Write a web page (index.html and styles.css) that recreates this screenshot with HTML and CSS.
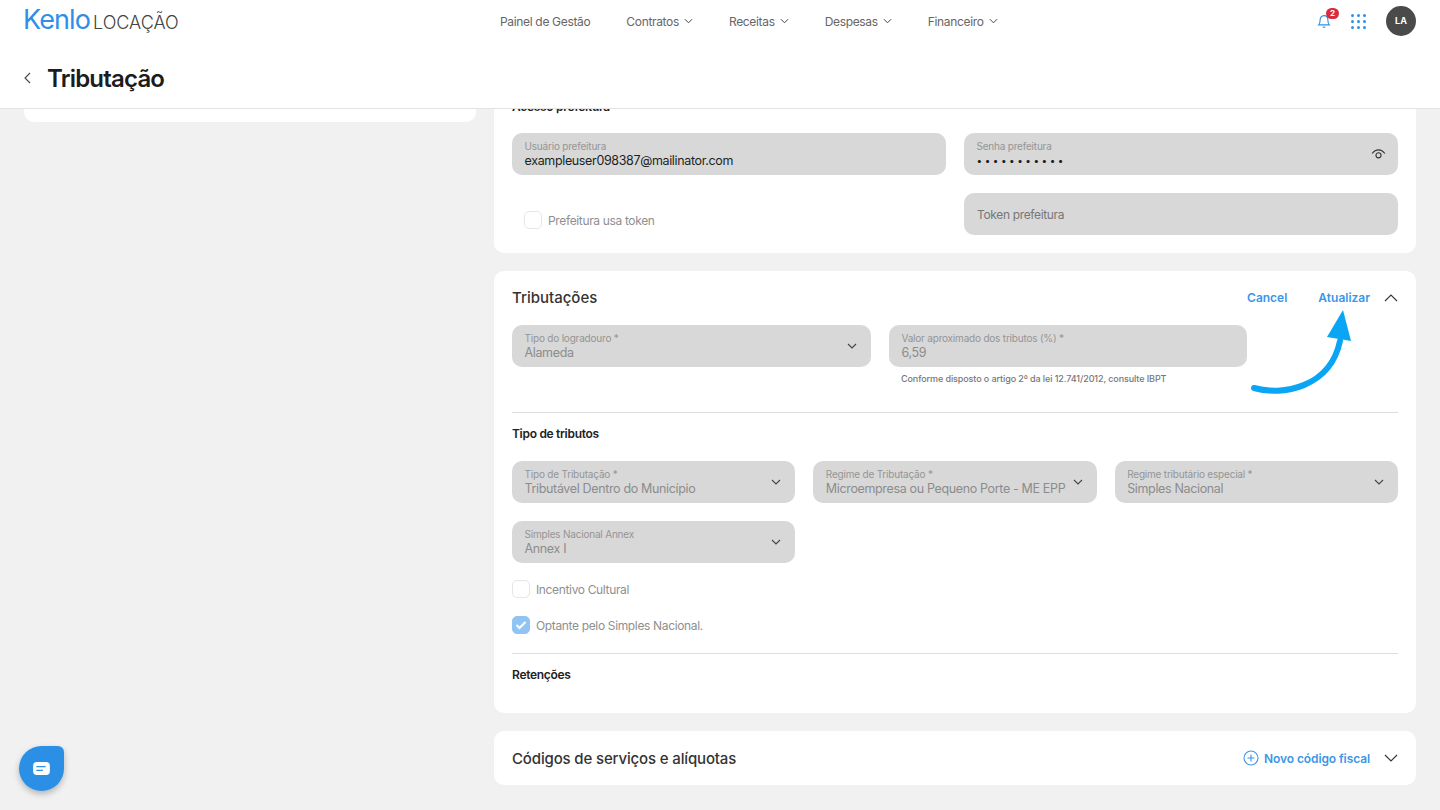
FILE: index.html
```html
<!DOCTYPE html>
<html lang="pt-BR">
<head>
    <meta charset="UTF-8">
    <meta name="viewport" content="width=device-width, initial-scale=1.0">
    <title>Tributação</title>
    <link rel="stylesheet" href="styles.css">
</head>
<body>
    <header class="topbar">
        <div class="nav-row">
            <div class="logo"><span class="logo-mark">Kenlo</span><span class="logo-sub">LOCAÇÃO</span></div>
            <nav class="nav">
                <a>Painel de Gestão</a>
                <a>Contratos <svg class="nav-caret" viewBox="0 0 10 6"><path d="M1 1l4 4 4-4"/></svg></a>
                <a>Receitas <svg class="nav-caret" viewBox="0 0 10 6"><path d="M1 1l4 4 4-4"/></svg></a>
                <a>Despesas <svg class="nav-caret" viewBox="0 0 10 6"><path d="M1 1l4 4 4-4"/></svg></a>
                <a>Financeiro <svg class="nav-caret" viewBox="0 0 10 6"><path d="M1 1l4 4 4-4"/></svg></a>
            </nav>
            <div class="nav-right">
                <div class="bell">
                    <svg viewBox="0 0 16 18" width="14" height="16"><path d="M2 13.500c1.200-1.300 1.500-2.500 1.500-5C3.500 5 5.300 2.800 8 2.800s4.500 2.200 4.500 5.700c0 2.500.3 3.700 1.500 5z"/><path d="M6.500 16h3"/></svg>
                    <span class="badge">2</span>
                </div>
                <div class="apps">
                    <i></i><i></i><i></i><i></i><i></i><i></i><i></i><i></i><i></i>
                </div>
                <div class="avatar">LA</div>
            </div>
        </div>
        <div class="title-row">
            <svg class="back" viewBox="0 0 7 12" width="7" height="12"><path d="M6 1L1 6l5 5"/></svg>
            <h1>Tributação</h1>
        </div>
    </header>

    <main class="page">
        <aside class="side">
            <div class="side-card"></div>
        </aside>
        <div class="content">
            <!-- Acesso prefeitura -->
            <section class="card card-access">
                <h3 class="sub-title">Acesso prefeitura</h3>
                <div class="grid-2">
                    <div class="field">
                        <label>Usuário prefeitura</label>
                        <div class="value dark">exampleuser098387@mailinator.com</div>
                    </div>
                    <div class="field">
                        <label>Senha prefeitura</label>
                        <div class="value dark dots">•••••••••••</div>
                        <svg class="eye" viewBox="0 0 16 11" width="15" height="10"><path d="M1 5c2-2.700 4.300-4 7-4s5 1.300 7 4"/><circle cx="8" cy="7" r="2.800"/></svg>
                    </div>
                    <div class="check-row token-check">
                        <span class="box"></span>
                        <span>Prefeitura usa token</span>
                    </div>
                    <div class="field field-empty">Token prefeitura</div>
                </div>
            </section>

            <!-- Tributações -->
            <section class="card card-tax">
                <div class="card-head">
                    <h2>Tributações</h2>
                    <a class="link link-cancel">Cancel</a>
                    <a class="link">Atualizar</a>
                    <svg class="toggle" viewBox="0 0 14 8" width="14" height="8"><path d="M1 7l6-6 6 6"/></svg>
                </div>
                <div class="grid-tax">
                    <div class="field">
                        <label>Tipo do logradouro *</label>
                        <div class="value">Alameda</div>
                        <svg class="caret" viewBox="0 0 10 6"><path d="M1 1l4 4 4-4"/></svg>
                    </div>
                    <div>
                        <div class="field">
                            <label>Valor aproximado dos tributos (%) *</label>
                            <div class="value">6,59</div>
                        </div>
                        <p class="hint">Conforme disposto o artigo 2º da lei 12.741/2012, consulte IBPT</p>
                    </div>
                </div>
                <hr class="divider divider-top">
                <h3 class="sub-title">Tipo de tributos</h3>
                <div class="grid-3">
                    <div class="field">
                        <label>Tipo de Tributação *</label>
                        <div class="value">Tributável Dentro do Município</div>
                        <svg class="caret" viewBox="0 0 10 6"><path d="M1 1l4 4 4-4"/></svg>
                    </div>
                    <div class="field">
                        <label>Regime de Tributação *</label>
                        <div class="value">Microempresa ou Pequeno Porte - ME EPP</div>
                        <svg class="caret" viewBox="0 0 10 6"><path d="M1 1l4 4 4-4"/></svg>
                    </div>
                    <div class="field">
                        <label>Regime tributário especial *</label>
                        <div class="value">Simples Nacional</div>
                        <svg class="caret" viewBox="0 0 10 6"><path d="M1 1l4 4 4-4"/></svg>
                    </div>
                    <div class="field">
                        <label>Simples Nacional Annex</label>
                        <div class="value">Annex I</div>
                        <svg class="caret" viewBox="0 0 10 6"><path d="M1 1l4 4 4-4"/></svg>
                    </div>
                </div>
                <div class="check-row">
                    <span class="box"></span>
                    <span>Incentivo Cultural</span>
                </div>
                <div class="check-row">
                    <span class="box checked"><svg viewBox="0 0 12 10" width="12" height="10"><path d="M1.500 5l3 3 6-6"/></svg></span>
                    <span>Optante pelo Simples Nacional.</span>
                </div>
                <hr class="divider">
                <h3 class="sub-title">Retenções</h3>
                <!-- seta de destaque -->
                <svg class="arrow" viewBox="0 0 104 90" width="104" height="90">
                    <path class="arrow-line" d="M4 80c28 8 76 0 86-47"/>
                    <path class="arrow-head" d="M93 2L77 29l24 4z"/>
                </svg>
            </section>

            <!-- Códigos -->
            <section class="card card-codes">
                <h2>Códigos de serviços e alíquotas</h2>
                <a class="link link-new">
                    <svg viewBox="0 0 16 16" width="16" height="16"><circle cx="8" cy="8" r="7"/><path d="M8 4.500v7M4.500 8h7"/></svg>
                    Novo código fiscal
                </a>
                <svg class="toggle" viewBox="0 0 14 8" width="14" height="8"><path d="M1 1l6 6 6-6"/></svg>
            </section>
        </div>
    </main>

    <button class="chat-button">
        <svg viewBox="0 0 18 14" width="17" height="13"><rect width="18" height="14" rx="4"/><path d="M3.500 5h10M3.500 9h7"/></svg>
    </button>
</body>
</html>
```

FILE: styles.css
```css
/* General styles */
body {
    font-family: Inter, "Noto Sans", sans-serif;
    margin: 0;
    height: 810px;
    overflow: hidden;
    background-color: #f1f1f1;
    color: #1f1f1f;
}

/* Header */
.topbar {
    height: 109px;
    box-sizing: border-box;
    background: #fff;
    border-bottom: 1px solid #e2e2e2;
    position: relative;
    z-index: 2;
}

.nav-row {
    display: flex;
    align-items: center;
    height: 42px;
    padding: 0 24px;
}

.logo {
    display: flex;
    align-items: baseline;
    width: 476px;
    margin-left: -1px;
    margin-right: 1px;
    padding-bottom: 4px;
    line-height: 1;
}

.logo-mark {
    font-size: 27px;
    font-weight: 400;
    color: #2f8fe8;
    letter-spacing: -0.9px;
}

.logo-sub {
    margin-left: 3px;
    font-size: 18px;
    font-weight: 300;
    color: #444;
}

.nav {
    display: flex;
    gap: 36px;
    font-size: 12px;
    letter-spacing: -0.33px;
    color: #666;
}

.nav a {
    display: flex;
    align-items: center;
    gap: 5px;
}

.nav-caret {
    width: 9px;
    height: 6px;
}

.nav-caret, .caret, .toggle, .back {
    fill: none;
    stroke: #444;
    stroke-width: 1.1;
}

.nav-right {
    margin-left: auto;
    display: flex;
    align-items: center;
}

.bell {
    position: relative;
    display: flex;
}

.bell svg {
    fill: none;
    stroke: #2f8fe8;
    stroke-width: 1.3;
}

.badge {
    position: absolute;
    top: -5px;
    left: 9px;
    width: 13px;
    height: 11px;
    border-radius: 6px;
    background: #dc2a3c;
    color: #fff;
    font-size: 8px;
    font-weight: 700;
    line-height: 11px;
    text-align: center;
}

.apps {
    margin-left: 20px;
    display: grid;
    grid-template-columns: repeat(3, 3px);
    gap: 3px;
}

.apps i {
    width: 3px;
    height: 3px;
    border-radius: 50%;
    background: #2f8fe8;
}

.avatar {
    margin-left: 20px;
    width: 30px;
    height: 30px;
    border-radius: 50%;
    background: #4a4a4a;
    color: #fff;
    font-size: 9px;
    font-weight: 700;
    line-height: 30px;
    text-align: center;
}

.title-row {
    display: flex;
    align-items: center;
    height: 60px;
    margin-top: 6px;
    padding-left: 24px;
}

.back {
    margin-right: 17px;
}

h1 {
    margin: 0 0 0 -1px;
    font-size: 24px;
    font-weight: 600;
    letter-spacing: -0.8px;
    color: #1c1c1c;
}

/* Page */
.page {
    display: flex;
    gap: 18px;
    height: 701px;
    overflow: hidden;
    padding: 0 24px;
}

.side {
    width: 452px;
}

.side-card {
    height: 13px;
    background: #fff;
    border-radius: 0 0 10px 10px;
}

.content {
    flex: 1;
    display: flex;
    flex-direction: column;
    gap: 18px;
}

.card {
    position: relative;
    background: #fff;
    border-radius: 10px;
    padding: 0 18px;
}

.card-access {
    margin-top: -15px;
    padding-bottom: 18px;
}

.card-access .sub-title {
    margin: 6px 0 19px;
}

h2 {
    margin: 0;
    font-size: 15px;
    font-weight: 500;
    color: #333;
}

.sub-title {
    margin: 0;
    font-size: 12px;
    line-height: 14px;
    font-weight: 600;
    letter-spacing: -0.3px;
    color: #222;
}

.grid-2 {
    display: grid;
    grid-template-columns: 1fr 1fr;
    gap: 18px;
}

.field {
    position: relative;
    box-sizing: border-box;
    height: 42px;
    padding: 7px 12.5px;
    background: #d8d8d8;
    border-radius: 10px;
    color: #8c8c8c;
}

.field label {
    display: block;
    font-size: 10px;
    line-height: 13px;
    color: #959595;
    letter-spacing: -0.2px;
}

.value {
    font-size: 12.5px;
    line-height: 15px;
    letter-spacing: -0.35px;
    white-space: nowrap;
    color: #8c8c8c;
}

.value.dark {
    color: #1f1f1f;
}

.value.dots {
    font-size: 10px;
    letter-spacing: 2.5px;
}

.field-empty {
    padding-left: 13px;
    font-size: 12px;
    line-height: 29px;
    letter-spacing: -0.35px;
    color: #777;
}

.eye {
    position: absolute;
    right: 12px;
    top: 16px;
    fill: none;
    stroke: #333;
    stroke-width: 1.2;
}

.caret {
    position: absolute;
    right: 14px;
    top: 18px;
    width: 10px;
    height: 6px;
}

.check-row {
    display: flex;
    align-items: center;
    gap: 6px;
    height: 18px;
    font-size: 12px;
    letter-spacing: -0.35px;
    color: #8f8f8f;
}

.token-check {
    padding-left: 12px;
    margin-top: 18px;
}

.box {
    display: flex;
    align-items: center;
    justify-content: center;
    box-sizing: border-box;
    width: 18px;
    height: 18px;
    border: 1px solid #e6e6e6;
    border-radius: 5px;
}

.box.checked {
    background: #90c4f2;
    border-color: #90c4f2;
}

.box svg {
    fill: none;
    stroke: #fff;
    stroke-width: 2;
}

.card-tax {
    height: 442px;
    box-sizing: border-box;
}

.card-head {
    display: flex;
    align-items: center;
    height: 53px;
    margin-bottom: 1px;
}

.link {
    font-size: 12px;
    font-weight: 600;
    color: #3b96e8;
}

.card-head h2 {
    margin-right: auto;
}

.link-cancel {
    margin-right: 31px;
}

.toggle {
    margin-left: 14px;
    stroke: #333;
}

.grid-tax {
    display: grid;
    grid-template-columns: 359px 358px;
    gap: 18px;
}

.hint {
    margin: 6px 0 0 12px;
    font-size: 9px;
    line-height: 11px;
    font-weight: 500;
    letter-spacing: -0.1px;
    color: #777;
}

.divider {
    margin: 0;
    border: 0;
    border-top: 1px solid #ddd;
}

.divider-top {
    margin-top: 28px;
}

.divider + .sub-title {
    margin-top: 14px;
}

.grid-3 {
    display: grid;
    grid-template-columns: repeat(3, 1fr);
    gap: 18px;
    margin: 20px 0 18px;
}

.card-tax .check-row {
    margin-top: -1px;
}

.card-tax .check-row + .check-row {
    margin-top: 18px;
}

.card-tax .check-row + .divider {
    margin-top: 19px;
}

.arrow {
    position: absolute;
    left: 756px;
    top: 37px;
}

.arrow-line {
    fill: none;
    stroke: #0aa5f5;
    stroke-width: 6;
    stroke-linecap: round;
}

.arrow-head {
    fill: #0aa5f5;
}

.card-codes {
    display: flex;
    align-items: center;
    height: 54px;
}

.card-codes h2 {
    margin-right: auto;
    letter-spacing: -0.15px;
}

.link-new {
    display: flex;
    align-items: center;
    gap: 5px;
    letter-spacing: -0.1px;
}

.link-new svg {
    fill: none;
    stroke: #3b96e8;
    stroke-width: 1.1;
}

.chat-button {
    position: fixed;
    left: 19px;
    top: 746px;
    width: 45px;
    height: 45px;
    display: flex;
    align-items: center;
    justify-content: center;
    padding: 0;
    border: none;
    border-radius: 50% 6px 50% 50%;
    background: #2b8fe6;
    box-shadow: 0 3px 6px rgba(0, 0, 0, 0.25);
}

.chat-button rect {
    fill: #fff;
}

.chat-button path {
    fill: none;
    stroke: #2b8fe6;
    stroke-width: 1.4;
}
```
